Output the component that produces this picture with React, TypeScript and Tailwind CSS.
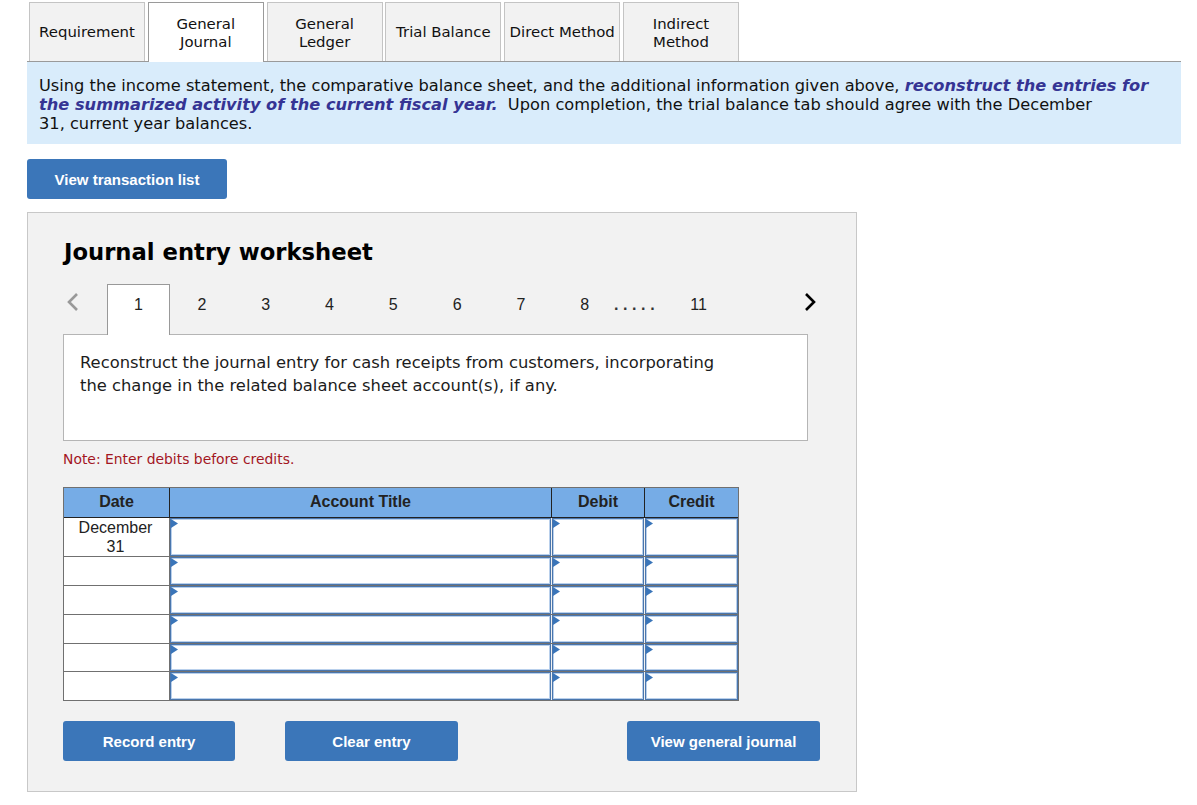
import React from "react";

const verdana = "font-['DejaVu_Sans','Liberation_Sans',sans-serif]";
const arial = "font-['Liberation_Sans',Arial,sans-serif]";

const tabs = [
    { id: "req", lines: ["Requirement"] },
    { id: "journal", lines: ["General", "Journal"], active: true },
    { id: "ledger", lines: ["General", "Ledger"] },
    { id: "trial", lines: ["Trial Balance"] },
    { id: "direct", lines: ["Direct Method"] },
    { id: "indirect", lines: ["Indirect", "Method"] }
];

const rows = [
    { height: "h-[38px]", date: ["December", "31"] },
    { height: "h-[29px]", date: [] },
    { height: "h-[29px]", date: [] },
    { height: "h-[29px]", date: [] },
    { height: "h-[28px]", date: [] },
    { height: "h-[29px]", date: [] }
];

const EntryInput: React.FC<{ width: string }> = ({ width }) => (
    <div className={`${width} relative h-full border border-[#4a76ad] bg-white`}>
        <div className="h-full border border-[#b9d0ec] bg-white" />
        <svg className="absolute left-0 top-0 w-[7px] h-[9px]" viewBox="0 0 7 9">
            <path d="M0 0 L7 4.5 L0 9 Z" fill="#3a75b9" />
        </svg>
    </div>
);

const Chevron: React.FC<{ points: string; color: string; className: string }> = ({ points, color, className }) => (
    <svg className={className} viewBox="0 0 12 18" fill="none">
        <polyline points={points} stroke={color} strokeWidth="2.6" />
    </svg>
);

const App: React.FC = () => {
    return (
        <div className={`${verdana} w-[1197px] h-[805px] bg-white overflow-hidden text-black`}>
            <div className="ml-[27px] w-[1154px] pt-[2px]">
                {/* Tabs */}
                <div className="flex gap-[2.8px] pl-[2px] h-[60px] border-b border-[#9a9a9a]">
                    {tabs.map((tab) => (
                        <div
                            key={tab.id}
                            className={`w-[116px] flex flex-col items-center justify-center border border-b-0 text-[14.9px] leading-[18px] text-[#111] ${tab.lines.length > 1 ? "pt-px" : ""} ${tab.active ? "h-[60px] bg-white border-[#9a9a9a]" : "h-[59px] bg-[#f2f2f2] border-[#c4c4c4]"}`}
                        >
                            {tab.lines.map((line) => (
                                <span key={line}>{line}</span>
                            ))}
                        </div>
                    ))}
                </div>

                {/* Instructions */}
                <div className="h-[82px] bg-[#d9ecfb] pl-[12px] pt-[14px] text-[16.23px] leading-[19px] text-[#111] whitespace-nowrap">
                    <p>
                        Using the income statement, the comparative balance sheet, and the additional information given above,{" "}
                        <b className="italic text-[#353494]">reconstruct the entries for</b>
                        <br />
                        <b className="italic text-[#353494]">the summarized activity of the current fiscal year.</b>
                        {"  "}&nbsp;Upon completion, the trial balance tab should agree with the December
                        <br />
                        31, current year balances.
                    </p>
                </div>

                <button className={`${arial} mt-[15px] block w-[200px] h-[40px] pt-[2px] rounded-[3px] bg-[#3b76b9] text-white text-[15px] font-bold`}>
                    View transaction list
                </button>

                {/* Worksheet */}
                <div className="mt-[13px] w-[830px] h-[580px] bg-[#f2f2f2] border border-[#c8c8c8] pl-[35px] pt-[24px]">
                    <h2 className="ml-px text-[22.7px] leading-[30px] font-bold">Journal entry worksheet</h2>

                    {/* Stepper */}
                    <div className={`${arial} mt-[17px] flex h-[51px] relative text-[16px] text-[#222]`}>
                        <div className="w-[44px] pt-[9px] pl-[4px]">
                            <Chevron points="10,1 2,9 10,17" color="#999" className="w-[12px] h-[18px]" />
                        </div>
                        <div className="relative z-10 w-[63px] h-[51px] bg-white border border-b-0 border-[#999] flex justify-center pt-[8px]">1</div>
                        {["2", "3", "4", "5", "6", "7", "8"].map((n) => (
                            <div key={n} className="w-[63.8px] flex justify-center pt-[9px]">{n}</div>
                        ))}
                        <div className="w-[52px] -ml-[6px] flex justify-center pt-[9px] font-bold tracking-[4.6px] text-[#333]">.....</div>
                        <div className="w-[40px] ml-[16px] flex justify-center pt-[9px]">11</div>
                        <div className="absolute left-[741px] top-[9px]">
                            <Chevron points="2,1 10,9 2,17" color="#000" className="w-[12px] h-[18px]" />
                        </div>
                    </div>

                    {/* Question */}
                    <div className="-mt-px w-[745px] h-[107px] bg-white border border-[#b5b5b5] pl-[16px] pt-[16px] text-[16.35px] leading-[23px] text-[#1c1c1c] whitespace-nowrap">
                        Reconstruct the journal entry for cash receipts from customers, incorporating
                        <br />
                        the change in the related balance sheet account(s), if any.
                    </div>

                    <p className="mt-[10px] text-[13.9px] leading-[17px] text-[#a3161f]">Note: Enter debits before credits.</p>

                    {/* Journal table */}
                    <div className={`${arial} mt-[19px] w-[676px] border border-[#707070]`}>
                        <div className="flex h-[30px] pb-[2px] bg-[#76ace6] border-b border-[#222] text-[16px] font-bold text-[#222]">
                            <div className="w-[106px] -mb-[2px] pb-[2px] border-r border-[#222] flex items-center justify-center">Date</div>
                            <div className="w-[382px] -mb-[2px] pb-[2px] border-r border-[#222] flex items-center justify-center">Account Title</div>
                            <div className="w-[93px] -mb-[2px] pb-[2px] border-r border-[#222] flex items-center justify-center">Debit</div>
                            <div className="flex-1 flex items-center justify-center">Credit</div>
                        </div>
                        {rows.map((row, i) => (
                            <div key={i} className={`${row.height} flex ${i > 0 ? "border-t border-[#707070]" : ""}`}>
                                <div className="w-[106px] pr-[2px] border-r border-[#707070] bg-white flex flex-col items-center text-[16px] leading-[19px] text-[#222]">
                                    {row.date.map((line) => (
                                        <span key={line}>{line}</span>
                                    ))}
                                </div>
                                <EntryInput width="w-[381px] mr-px" />
                                <EntryInput width="w-[92px] mr-px" />
                                <EntryInput width="flex-1" />
                            </div>
                        ))}
                    </div>

                    {/* Actions */}
                    <div className={`${arial} mt-[20px] flex text-white text-[15px] font-bold`}>
                        <button className="w-[172px] h-[40px] pt-[2px] rounded-[3px] bg-[#3b76b9]">Record entry</button>
                        <button className="ml-[50px] w-[173px] h-[40px] pt-[2px] rounded-[3px] bg-[#3b76b9]">Clear entry</button>
                        <button className="ml-[169px] w-[193px] h-[40px] pt-[2px] rounded-[3px] bg-[#3b76b9]">View general journal</button>
                    </div>
                </div>
            </div>
        </div>
    );
};

export default App;
